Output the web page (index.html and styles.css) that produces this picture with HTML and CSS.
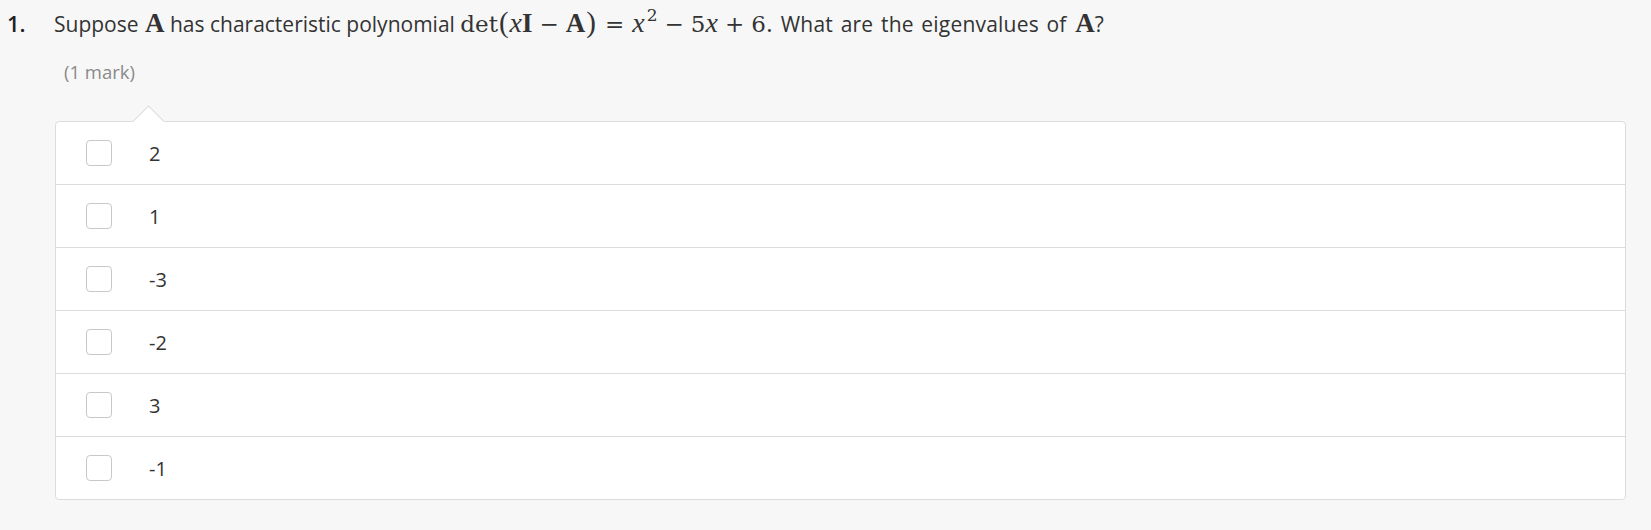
FILE: index.html
```html
<!DOCTYPE html>
<html>
<head>
<meta charset="utf-8">
<link rel="stylesheet" href="styles.css">
</head>
<body>
<div class="question">
  <div class="q-head">
    <span class="q-num">1.</span>
    <span class="q-text">Suppose <span class="m bf">A</span> has characteristic polynomial <span class="m">det<span class="paren">(</span><i>x</i><span class="bf">I</span><span class="op">−</span><span class="bf">A</span><span class="paren">)</span><span class="rel">=</span><i>x</i><sup>2</sup><span class="op">−</span>5<i>x</i><span class="op">+</span>6.</span><span class="tail"> What are the eigenvalues of <span class="m bf">A</span>?</span></span>
  </div>
  <div class="marks">(1 mark)</div>
  <div class="card">
    <div class="row"><span class="box"></span><span class="label">2</span></div>
    <div class="row"><span class="box"></span><span class="label">1</span></div>
    <div class="row"><span class="box"></span><span class="label">-3</span></div>
    <div class="row"><span class="box"></span><span class="label">-2</span></div>
    <div class="row"><span class="box"></span><span class="label">3</span></div>
    <div class="row"><span class="box"></span><span class="label">-1</span></div>
  </div>
</div>
</body>
</html>
```

FILE: styles.css
```css
html, body {
  margin: 0;
  padding: 0;
  background: #f7f7f7;
}
body {
  font-family: "Open Sans", "Liberation Sans", sans-serif;
  color: #333;
}
.question {
  padding-top: 7px;
}
.q-head {
  display: flex;
  align-items: baseline;
  font-size: 21px;
  line-height: 33px;
  height: 33px;
}
.q-num {
  width: 47px;
  padding-left: 7px;
  font-size: 22px;
  font-weight: 600;
  color: #222;
}
.q-text {
  white-space: nowrap;
}
.tail {
  word-spacing: 2px;
  letter-spacing: 0.2px;
}
.m {
  font-family: "DejaVu Serif", "Liberation Serif", serif;
  font-size: 23px;
  line-height: 1;
  letter-spacing: 0;
  word-spacing: 0;
}
.m i {
  font-family: "Liberation Serif", serif;
  font-size: 28px;
}
.bf {
  font-weight: bold;
}
.m .bf {
  font-family: "Liberation Serif", serif;
  font-size: 27px;
}
.q-text .m.bf {
  font-family: "Liberation Serif", serif;
  font-size: 27px;
  margin-left: 1px;
}
.paren {
  font-size: 29px;
  font-family: "Liberation Serif", serif;
  margin: 0 1px;
}
.op {
  margin: 0 7px;
}
.rel {
  margin: 0 8px;
}
.m sup {
  font-size: 17px;
  line-height: 0;
  vertical-align: 11px;
  margin-left: 2px;
}
.marks {
  margin-top: 18px;
  margin-left: 64px;
  font-size: 18.5px;
  line-height: 27px;
  color: #8a8a8a;
}
.card {
  position: relative;
  margin: 36px 25px 0 55px;
  background: #fff;
  border: 1px solid #dcdcdc;
  border-radius: 4px;
}
.card::before {
  content: "";
  position: absolute;
  left: 81px;
  top: -12px;
  width: 22px;
  height: 22px;
  background: #fff;
  border-left: 1px solid #dcdcdc;
  border-top: 1px solid #dcdcdc;
  transform: rotate(45deg);
}
.row {
  position: relative;
  display: flex;
  align-items: center;
  height: 62px;
  padding-left: 30px;
}
.row + .row {
  border-top: 1px solid #dcdcdc;
}
.box {
  width: 24px;
  height: 24px;
  border: 1px solid #c8c8c8;
  border-radius: 4px;
  background: #fff;
}
.label {
  margin-left: 37px;
  font-size: 20px;
  color: #333;
}
```
